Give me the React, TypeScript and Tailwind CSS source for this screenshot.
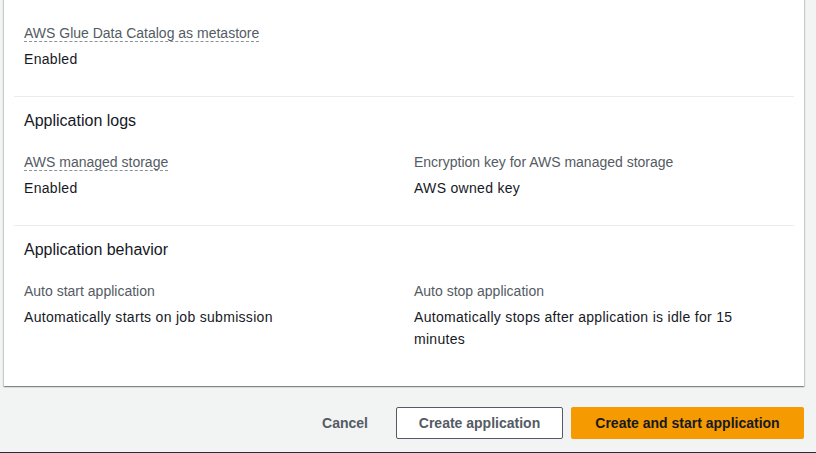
// Review step: EMR Serverless application summary.
const font = { fontFamily: '"Liberation Sans", Arial, sans-serif' };

type Field = { label: string; value: string; hint?: boolean };

type SectionProps = {
  title: string;
  fields: Field[];
  last?: boolean;
};

function Section({ title, fields, last }: SectionProps) {
  return (
    <div className={`px-[10px] pt-[12px] pb-[26px] ${last ? "" : "border-b border-[#eaeded]"}`}>
      <h2 className="text-[16px] leading-[24px] text-[#16191f] font-normal">{title}</h2>
      <div className="mt-[18px] grid grid-cols-2 gap-x-[20px]">
        {fields.map((f) => (
          <div key={f.label} className="flex flex-col gap-[4px]">
            <div className="text-[14px] leading-[22px] text-[#545b64]">
              {f.hint ? (
                <span className="border-b border-dashed border-[#879596]">{f.label}</span>
              ) : (
                f.label
              )}
            </div>
            <div className="text-[14px] leading-[22px] text-[#16191f] tracking-[0.3px]">{f.value}</div>
          </div>
        ))}
      </div>
    </div>
  );
}

export default function App() {
  return (
    <div style={font} className="h-[453px] overflow-hidden bg-[#f2f3f3] flex flex-col">
      <div className="pl-[4px] pr-[12px]">
        {/* Card (top is scrolled off) */}
        <div className="-mt-[32px] bg-white px-[10px] pb-[10px] shadow-[0_1px_1px_0_rgba(0,28,36,0.3),1px_1px_1px_0_rgba(0,28,36,0.15),-1px_1px_1px_0_rgba(0,28,36,0.15)]">
          <Section
            title="Metastore settings"
            fields={[{ label: "AWS Glue Data Catalog as metastore", value: "Enabled", hint: true }]}
          />
          <Section
            title="Application logs"
            fields={[
              { label: "AWS managed storage", value: "Enabled", hint: true },
              { label: "Encryption key for AWS managed storage", value: "AWS owned key" },
            ]}
          />
          <Section
            title="Application behavior"
            last
            fields={[
              { label: "Auto start application", value: "Automatically starts on job submission" },
              { label: "Auto stop application", value: "Automatically stops after application is idle for 15 minutes" },
            ]}
          />
        </div>

        {/* Actions */}
        <div className="flex justify-end items-center gap-[8px] pt-[21px]">
          <button className="h-[32px] px-[20px] text-[14px] font-bold text-[#545b64]">Cancel</button>
          <button className="h-[32px] w-[167px] rounded-[2px] border border-[#545b64] bg-white text-[14px] font-bold text-[#545b64]">
            Create application
          </button>
          <button className="h-[32px] w-[233px] rounded-[2px] bg-[#f59a00] text-[14px] font-bold text-[#16191f]">
            Create and start application
          </button>
        </div>
      </div>
      <div className="flex-1" />
      <div className="h-px bg-[#232f3e]" />
    </div>
  );
}
